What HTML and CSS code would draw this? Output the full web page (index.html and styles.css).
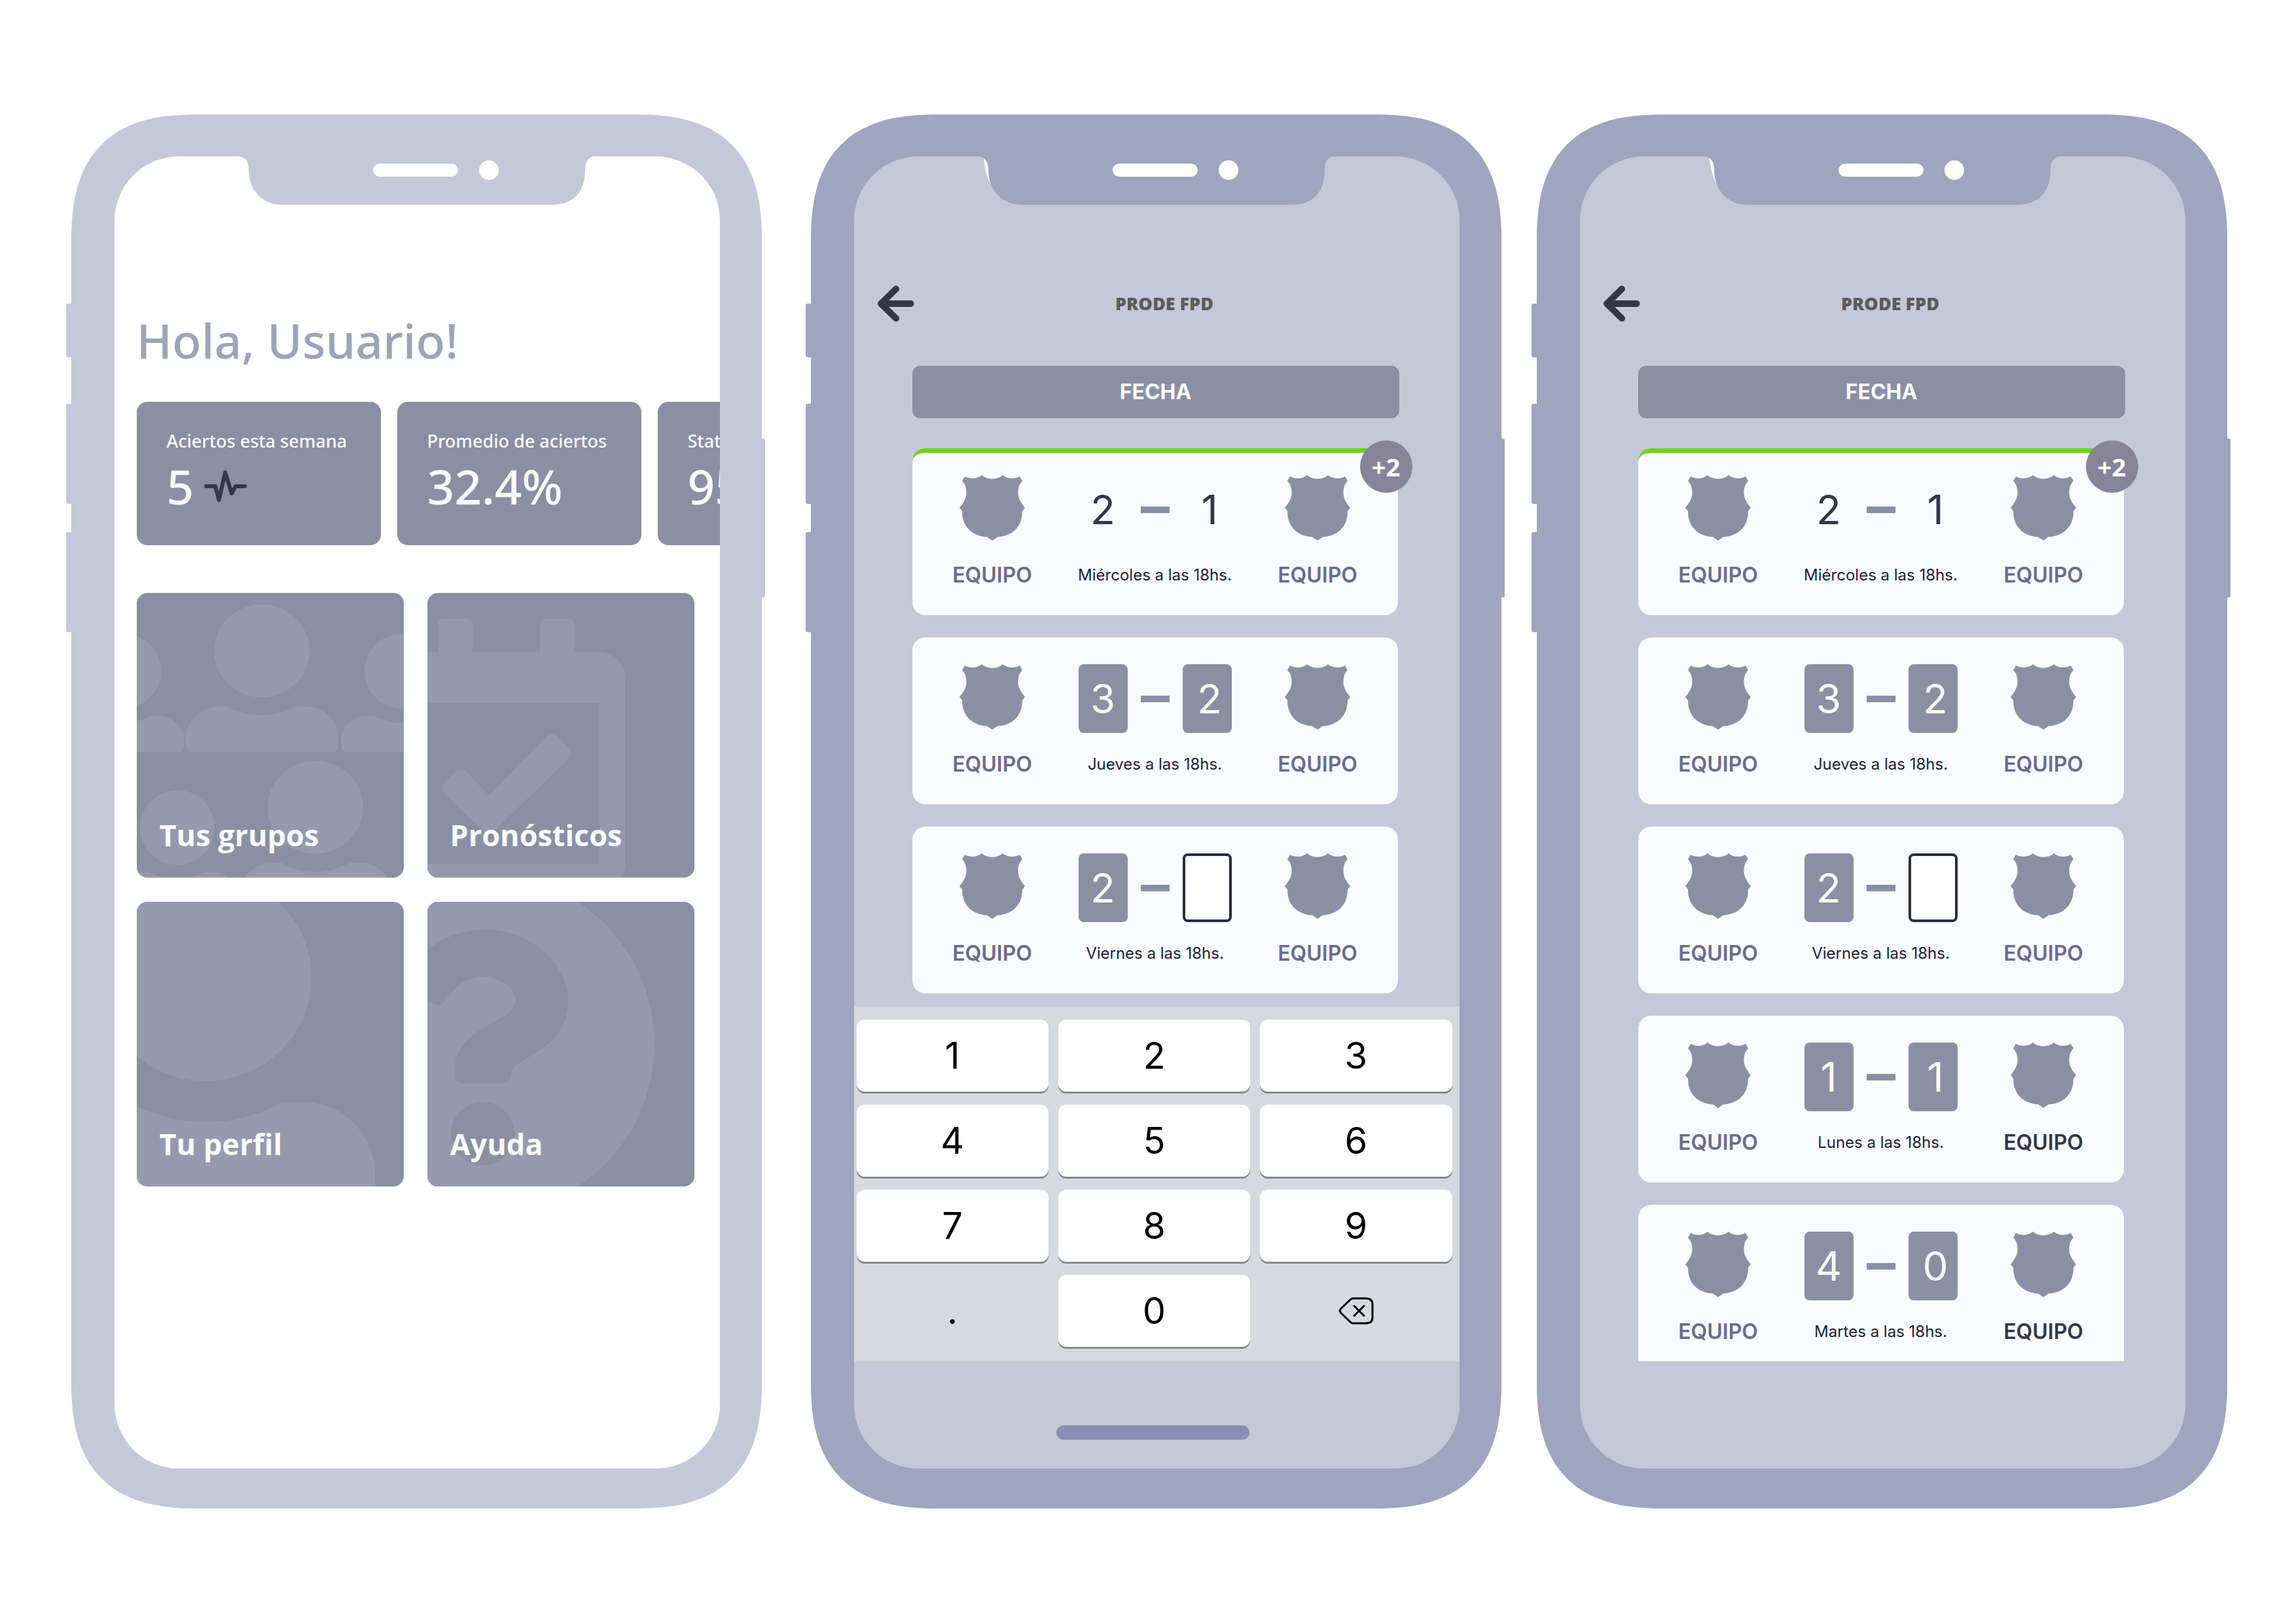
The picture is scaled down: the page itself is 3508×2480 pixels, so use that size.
FILE: index.html
```html
<!DOCTYPE html>
<html lang="es">
<head>
<meta charset="utf-8">
<meta name="viewport" content="width=device-width, initial-scale=1">
<title>Prode FPD</title>
<link rel="stylesheet" href="styles.css">
</head>
<body>
<svg class="sprite" aria-hidden="true">
  <symbol id="frame" viewBox="0 0 1068 2130" preserveAspectRatio="none">
    <g fill="var(--frame)">
      <rect x="0" y="289" width="20" height="82" rx="3"/>
      <rect x="0" y="442" width="20" height="153" rx="3"/>
      <rect x="0" y="638" width="20" height="153" rx="3"/>
      <rect x="1048" y="495" width="20" height="243" rx="3"/>
      <path d="M8 190C8 124 22 78 54 46C86 14 132 0 198 0H873C939 0 985 14 1017 46C1049 78 1063 124 1063 190V1940C1063 2006 1049 2052 1017 2084C985 2116 939 2130 873 2130H198C132 2130 86 2116 54 2084C22 2052 8 2006 8 1940Z"/>
    </g>
    <rect x="74" y="64" width="925" height="2005" rx="98" fill="var(--screen)"/>
    <path d="M272 66C274 84 276 96 286 112L290 90L280 66Z" fill="#fff"/>
    <path d="M262 64C274 64 279 72 279 84C279 115 299 138 331 138H741C776 138 793 118 793 84C793 72 798 64 808 64V60H262Z" fill="var(--frame)"/>
    <rect x="469" y="75" width="130" height="20" rx="10" fill="#fff"/>
    <circle cx="646" cy="85" r="15" fill="#fff"/>
  </symbol>
  <symbol id="shield" viewBox="0 0 100 100">
    <path d="M8 2C16 6.500 27 6 34 0C42 7.500 58 7.500 66 0C73 6 84 6.500 92 2L96 9C91 14 89.500 20 89.500 27S92 40 100 50L96 55C96 80 80 93 58 94.600L50 100L42 94.600C20 93 4 80 4 55L0 50C8 40 10.500 34 10.500 27S9 14 4 9Z"/>
  </symbol>
  <symbol id="arrow" viewBox="0 0 57 56">
    <path d="M29 5.500L6 28L29 50.500M9 28H51.500" fill="none" stroke="currentColor" stroke-width="10" stroke-linecap="round" stroke-linejoin="round"/>
  </symbol>
  <symbol id="people" viewBox="0 0 408 434" overflow="visible">
    <ellipse cx="191" cy="88" rx="73" ry="71"/>
    <circle cx="405" cy="119" r="57"/>
    <circle cx="-20" cy="119" r="57"/>
    <path d="M127 173H140C170 191 212 191 243 173H259C286 173 308 194 308 222V232Q308 243 298 243H85Q75 243 75 232V222C75 194 99 173 127 173Z"/>
    <path d="M352 187H363C388 202 422 202 447 187H458C480 187 498 203 498 225V233Q498 243 488 243H322Q312 243 312 233V225C312 203 330 187 352 187Z"/>
    <path d="M32 187C54 187 72 204 72 225V233Q72 243 63 243H-103Q-113 243 -113 233V225C-113 203 -95 187 -73 187H-62C-37 202 -4 202 21 187Z"/>
  </symbol>
</svg>

<main class="board">
  <section class="phone phone-home" aria-label="Inicio">
    <svg class="phone-frame" aria-hidden="true"><use href="#frame"/></svg>
    <div class="screen home">
      <h1 class="greeting">Hola, Usuario!</h1>
      <div class="stats">
        <div class="stat">
          <p class="stat-label">Aciertos esta semana</p>
          <p class="stat-value">5
            <svg class="pulse" viewBox="0 0 65 50" aria-hidden="true"><path d="M3 25H17L22.500 46L32 4L42 36L48 25H62" fill="none" stroke="currentColor" stroke-width="6" stroke-linecap="round" stroke-linejoin="round"/></svg>
          </p>
        </div>
        <div class="stat">
          <p class="stat-label">Promedio de aciertos</p>
          <p class="stat-value">32.4%</p>
        </div>
        <div class="stat">
          <p class="stat-label">Stat</p>
          <p class="stat-value">95</p>
        </div>
      </div>
      <nav class="tiles">
        <a class="tile" href="#grupos">
          <svg class="tile-art" viewBox="0 0 408 434" aria-hidden="true">
            <use href="#people" width="408" height="434"/>
            <use href="#people" x="82" y="239" width="408" height="434"/>
          </svg>
          <span class="tile-title">Tus grupos</span>
        </a>
        <a class="tile tile-cool" href="#pronosticos">
          <svg class="tile-art" viewBox="0 0 408 434" aria-hidden="true">
            <path d="M17 100V47Q17 39 25 39H61Q69 39 69 47V100ZM172 100V47Q172 39 180 39H216Q224 39 224 47V100Z"/>
            <path fill-rule="evenodd" d="M-60 90H263A39 39 0 0 1 302 129V414A39 39 0 0 1 263 453H-60ZM-60 168V414H259Q263 414 263 410V168Z"/>
            <path d="M94 309L180 221Q190 211 201 221L214 235Q224 245 214 255L102 363Q94 370 85 363L27 307Q18 298 27 288L41 275Q51 265 62 275Z"/>
          </svg>
          <span class="tile-title">Pronósticos</span>
        </a>
        <a class="tile" href="#perfil">
          <svg class="tile-art" viewBox="0 0 408 434" aria-hidden="true">
            <ellipse cx="105.500" cy="115" rx="161.500" ry="158.500"/>
            <path d="M0 312C70 345 150 345 223 305.500H254C315 305.500 364 355 364 416V434H0Z"/>
          </svg>
          <span class="tile-title">Tu perfil</span>
        </a>
        <a class="tile" href="#ayuda">
          <svg class="tile-art" viewBox="0 0 408 434" aria-hidden="true">
            <circle cx="86.500" cy="217" r="260.500"/>
            <g class="tile-cut">
              <path d="M0 73.500C24 53 55 42 90 42C155 42 215 92 215 150.600C215 232 127 235 127 264.500Q126 277 114 277H54Q42 277 42 265V257C42 188 135 185 135 149.400C135 132 112 114.500 84.500 114.500C50 114.500 40 136 24.600 153.700Q15 163 0 149Z"/>
              <circle cx="84.500" cy="354" r="48.500"/>
            </g>
          </svg>
          <span class="tile-title">Ayuda</span>
        </a>
      </nav>
    </div>
  </section>

  <section class="phone phone-dark" aria-label="Pronósticos con teclado">
    <svg class="phone-frame" aria-hidden="true"><use href="#frame"/></svg>
    <div class="screen">
      <header class="topbar">
        <button class="back" type="button" aria-label="Volver"><svg aria-hidden="true"><use href="#arrow"/></svg></button>
        <h1 class="title">PRODE FPD</h1>
      </header>
      <h2 class="round">FECHA</h2>
      <div class="matches">
        <article class="match match-won">
          <svg class="shield" aria-hidden="true"><use href="#shield"/></svg>
          <div class="score"><span class="goals">2</span><span class="dash"></span><span class="goals goals-away">1</span></div>
          <svg class="shield" aria-hidden="true"><use href="#shield"/></svg>
          <p class="team">EQUIPO</p><p class="when">Miércoles a las 18hs.</p><p class="team">EQUIPO</p>
          <span class="points">+2</span>
        </article>
        <article class="match">
          <svg class="shield" aria-hidden="true"><use href="#shield"/></svg>
          <div class="score"><input class="goals" inputmode="numeric" maxlength="1" value="3" aria-label="Goles local, jueves"><span class="dash"></span><input class="goals goals-away" inputmode="numeric" maxlength="1" value="2" aria-label="Goles visitante, jueves"></div>
          <svg class="shield" aria-hidden="true"><use href="#shield"/></svg>
          <p class="team">EQUIPO</p><p class="when">Jueves a las 18hs.</p><p class="team">EQUIPO</p>
        </article>
        <article class="match">
          <svg class="shield" aria-hidden="true"><use href="#shield"/></svg>
          <div class="score"><input class="goals" inputmode="numeric" maxlength="1" value="2" aria-label="Goles local, viernes"><span class="dash"></span><input class="goals goals-empty" inputmode="numeric" maxlength="1" aria-label="Goles visitante, viernes"></div>
          <svg class="shield" aria-hidden="true"><use href="#shield"/></svg>
          <p class="team">EQUIPO</p><p class="when">Viernes a las 18hs.</p><p class="team">EQUIPO</p>
        </article>
      </div>
      <div class="keypad">
        <button class="key" type="button">1</button>
        <button class="key" type="button">2</button>
        <button class="key" type="button">3</button>
        <button class="key" type="button">4</button>
        <button class="key" type="button">5</button>
        <button class="key" type="button">6</button>
        <button class="key" type="button">7</button>
        <button class="key" type="button">8</button>
        <button class="key" type="button">9</button>
        <button class="key key-flat" type="button">.</button>
        <button class="key" type="button">0</button>
        <button class="key key-flat" type="button" aria-label="Borrar">
          <svg class="erase" viewBox="0 0 54 42" aria-hidden="true"><path d="M22 2H42Q52 2 52 11V31Q52 40 42 40H22Q20 40 18 38L3.500 24Q1 21 3.500 18L18 4Q20 2 22 2ZM24 13.500L39 28.500M39 13.500L24 28.500" fill="none" stroke="currentColor" stroke-width="3" stroke-linecap="round" stroke-linejoin="round"/></svg>
        </button>
      </div>
      <div class="bottom"><span class="home-bar"></span></div>
    </div>
  </section>

  <section class="phone phone-dark" aria-label="Pronósticos">
    <svg class="phone-frame" aria-hidden="true"><use href="#frame"/></svg>
    <div class="screen">
      <header class="topbar">
        <button class="back" type="button" aria-label="Volver"><svg aria-hidden="true"><use href="#arrow"/></svg></button>
        <h1 class="title">PRODE FPD</h1>
      </header>
      <h2 class="round">FECHA</h2>
      <div class="matches">
        <article class="match match-won">
          <svg class="shield" aria-hidden="true"><use href="#shield"/></svg>
          <div class="score"><span class="goals">2</span><span class="dash"></span><span class="goals goals-away">1</span></div>
          <svg class="shield" aria-hidden="true"><use href="#shield"/></svg>
          <p class="team">EQUIPO</p><p class="when">Miércoles a las 18hs.</p><p class="team">EQUIPO</p>
          <span class="points">+2</span>
        </article>
        <article class="match">
          <svg class="shield" aria-hidden="true"><use href="#shield"/></svg>
          <div class="score"><input class="goals" inputmode="numeric" maxlength="1" value="3" aria-label="Goles local, jueves"><span class="dash"></span><input class="goals goals-away" inputmode="numeric" maxlength="1" value="2" aria-label="Goles visitante, jueves"></div>
          <svg class="shield" aria-hidden="true"><use href="#shield"/></svg>
          <p class="team">EQUIPO</p><p class="when">Jueves a las 18hs.</p><p class="team">EQUIPO</p>
        </article>
        <article class="match">
          <svg class="shield" aria-hidden="true"><use href="#shield"/></svg>
          <div class="score"><input class="goals" inputmode="numeric" maxlength="1" value="2" aria-label="Goles local, viernes"><span class="dash"></span><input class="goals goals-empty" inputmode="numeric" maxlength="1" aria-label="Goles visitante, viernes"></div>
          <svg class="shield" aria-hidden="true"><use href="#shield"/></svg>
          <p class="team">EQUIPO</p><p class="when">Viernes a las 18hs.</p><p class="team">EQUIPO</p>
        </article>
        <article class="match">
          <svg class="shield" aria-hidden="true"><use href="#shield"/></svg>
          <div class="score"><input class="goals" inputmode="numeric" maxlength="1" value="1" aria-label="Goles local, lunes"><span class="dash"></span><input class="goals goals-away" inputmode="numeric" maxlength="1" value="1" aria-label="Goles visitante, lunes"></div>
          <svg class="shield" aria-hidden="true"><use href="#shield"/></svg>
          <p class="team">EQUIPO</p><p class="when">Lunes a las 18hs.</p><p class="team team-strong">EQUIPO</p>
        </article>
        <article class="match">
          <svg class="shield" aria-hidden="true"><use href="#shield"/></svg>
          <div class="score"><input class="goals" inputmode="numeric" maxlength="1" value="4" aria-label="Goles local, martes"><span class="dash"></span><input class="goals goals-away" inputmode="numeric" maxlength="1" value="0" aria-label="Goles visitante, martes"></div>
          <svg class="shield" aria-hidden="true"><use href="#shield"/></svg>
          <p class="team">EQUIPO</p><p class="when">Martes a las 18hs.</p><p class="team team-strong">EQUIPO</p>
        </article>
      </div>
      <div class="bottom"></div>
    </div>
  </section>
</main>
</body>
</html>
```
FILE: styles.css
```css
:root {
  --slate: #8b8fa3;
  --lavender: #c5c8d9;
  --ink: #35354b;
  --paper: #f9fbff;
}

* {
  box-sizing: border-box;
}

body {
  margin: 0;
  background: #fff;
  font-family: "Open Sans", "Noto Sans", sans-serif;
}

h1, h2, p {
  margin: 0;
}

button, input {
  margin: 0;
  padding: 0;
  border: 0;
  background: none;
  font: inherit;
  color: inherit;
}

.sprite {
  display: block;
  width: 0;
  height: 0;
}

/* Phones */
.board {
  display: flex;
  justify-content: center;
  align-items: flex-start;
  gap: 41px;
  padding: 175px 100px;
}

.phone {
  --frame: var(--lavender);
  --screen: #fff;
  flex: 1 1 0;
  max-width: 1068px;
  aspect-ratio: 1068 / 2130;
  display: grid;
  grid-template: minmax(0, 1fr) / minmax(0, 1fr);
}

.phone-home {
  margin-right: 21px;
}

.phone-dark {
  --frame: #9fa4bf;
  --screen: var(--lavender);
}

.phone-frame,
.screen {
  grid-area: 1 / 1;
}

.phone-frame {
  width: 100%;
  height: 100%;
}

.screen {
  display: flex;
  flex-direction: column;
  margin: 64px 69px 61px 74px;
  overflow: hidden;
  z-index: 1;
}

/* Home */
.home {
  gap: 44px;
  padding: 231px 0 0 34px;
}

.greeting {
  font-family: "Noto Sans", "Open Sans", sans-serif;
  font-size: 73px;
  font-weight: 500;
  line-height: 100px;
  color: #9fa3b9;
}

.stats {
  display: flex;
  gap: 25px;
}

.stat {
  flex: 0 0 373px;
  height: 219px;
  padding: 42px 0 0 46px;
  border-radius: 16px;
  background: var(--slate);
  color: var(--paper);
  font-family: "Noto Sans", "Open Sans", sans-serif;
  white-space: nowrap;
}

.stat-label {
  font-size: 27px;
  font-weight: 500;
  line-height: 36px;
}

.stat-value {
  display: flex;
  align-items: center;
  gap: 16px;
  margin-top: 8px;
  font-size: 73px;
  font-weight: 500;
  line-height: 86px;
}

.pulse {
  width: 65px;
  height: 50px;
  color: var(--ink);
}

.tiles {
  display: grid;
  grid-template-columns: 1fr 1fr;
  gap: 37px 36px;
  margin: 29px 39px 0 0;
}

.tile {
  display: grid;
  height: 435px;
  border-radius: 16px;
  overflow: hidden;
  background: var(--slate);
  color: var(--paper);
  text-decoration: none;
}

.tile-art,
.tile-title {
  grid-area: 1 / 1;
}

.tile-art {
  width: 100%;
  height: 435px;
  fill: #9799ae;
}

.tile-cool .tile-art {
  fill: #9499ae;
}

.tile-cut {
  fill: var(--slate);
}

.tile-title {
  align-self: end;
  padding: 0 0 35px 35px;
  font-size: 45px;
  font-weight: 700;
  line-height: 60px;
}

/* Predictions */
.topbar {
  display: grid;
  grid-template-columns: 57px 1fr 57px;
  align-items: center;
  padding: 197px 11px 0 35px;
}

.back {
  height: 56px;
  color: var(--ink);
}

.back svg {
  display: block;
  width: 57px;
  height: 56px;
}

.title {
  font-size: 27px;
  font-weight: 800;
  line-height: 36px;
  text-align: center;
  color: #5b5b5b;
}

.round {
  margin: 67px 92px 0 89px;
  border-radius: 12px;
  background: var(--slate);
  color: var(--paper);
  font: 700 32px/80px Inter, sans-serif;
  text-align: center;
}

.matches {
  flex: 1 1 0;
  min-height: 0;
  display: flex;
  flex-direction: column;
  gap: 34px;
  padding: 46px 94px 0 89px;
  overflow: hidden;
  font-family: Inter, sans-serif;
}

.match {
  flex: none;
  position: relative;
  display: grid;
  grid-template: 105px 38px / 1fr 252px 1fr;
  row-gap: 29px;
  justify-items: center;
  height: 255px;
  padding-top: 41px;
  border-radius: 20px;
  background: var(--paper);
}

.match-won {
  padding-top: 34px;
  border-top: 7px solid #6bd60a;
}

.points {
  position: absolute;
  top: -19px;
  right: -22px;
  width: 80px;
  border-radius: 50%;
  background: #878499;
  color: var(--paper);
  font: 700 38px/80px "Open Sans", sans-serif;
  text-align: center;
}

.shield {
  width: 100px;
  height: 100px;
  fill: var(--slate);
}

.score {
  display: flex;
  align-items: center;
  justify-content: space-between;
  width: 234px;
}

.goals {
  width: 75px;
  height: 105px;
  border-radius: 8px;
  font-size: 62px;
  line-height: 105px;
  text-align: center;
  color: var(--ink);
}

input.goals {
  background: var(--slate);
  color: var(--paper);
}

.goals-away {
  padding-left: 8px;
}

input.goals-empty {
  border: 4px solid #2b2b42;
  background: #fff;
}

.dash {
  width: 44px;
  height: 10px;
  background: var(--slate);
}

.team {
  font-size: 32px;
  font-weight: 600;
  line-height: 38px;
  color: #6b6b8d;
}

.team-strong {
  color: var(--ink);
}

.when {
  font-size: 24px;
  line-height: 38px;
  color: #1f1f35;
  white-space: nowrap;
}

/* Keypad */
.keypad {
  display: grid;
  grid-template-columns: repeat(3, 1fr);
  grid-auto-rows: 110px;
  gap: 20px 15px;
  padding: 20px 11px 22px 4px;
  background: #d6d9de;
  font-family: Inter, sans-serif;
}

.key {
  display: grid;
  place-items: center;
  border-radius: 12px;
  background: #fff;
  box-shadow: 0 3px 0 #85888c;
  color: #000;
  font-size: 56px;
}

.key-flat {
  background: none;
  box-shadow: none;
}

.erase {
  width: 54px;
  height: 42px;
}

.bottom {
  flex: none;
  display: grid;
  place-items: center;
  height: 164px;
  padding: 54px 11px 0 0;
}

.home-bar {
  width: 295px;
  height: 22px;
  border-radius: 11px;
  background: #8b90b3;
}
```
